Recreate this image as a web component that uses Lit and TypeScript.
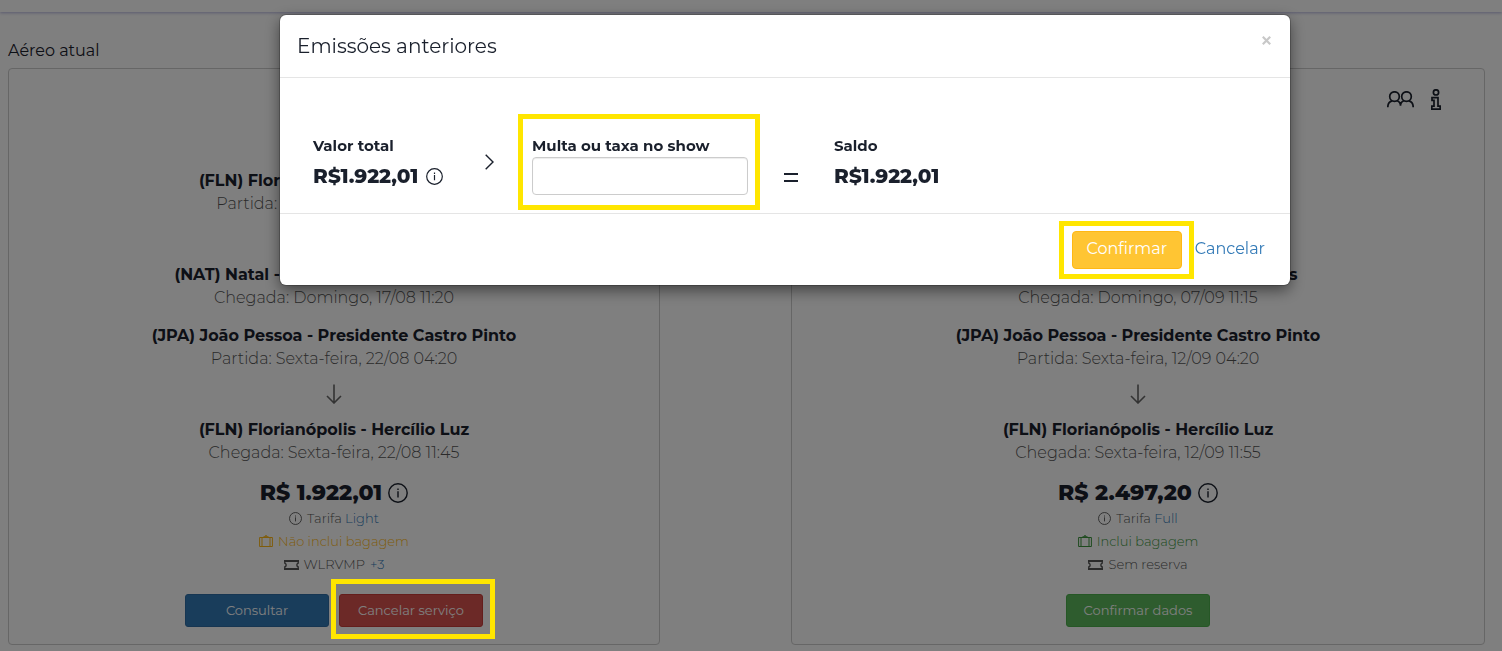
import { LitElement, html, css, svg, nothing } from "lit";
import { customElement, property } from "lit/decorators.js";

interface Leg {
  from: string;
  departs: string;
  to: string;
  arrives: string;
}

interface Offer {
  heading: string;
  legs: Leg[];
  price: string;
  fare: string;
  baggage: string;
  included: boolean;
  booking: string;
  more?: string;
}

const current: Offer = {
  heading: "Aéreo atual",
  legs: [
    {
      from: "(FLN) Florianópolis - Hercílio Luz",
      departs: "Partida: Domingo, 17/08 04:20",
      to: "(NAT) Natal - Governador Aluízio Alves",
      arrives: "Chegada: Domingo, 17/08 11:20",
    },
    {
      from: "(JPA) João Pessoa - Presidente Castro Pinto",
      departs: "Partida: Sexta-feira, 22/08 04:20",
      to: "(FLN) Florianópolis - Hercílio Luz",
      arrives: "Chegada: Sexta-feira, 22/08 11:45",
    },
  ],
  price: "R$ 1.922,01",
  fare: "Light",
  baggage: "Não inclui bagagem",
  included: false,
  booking: "WLRVMP",
  more: "+3",
};

const next: Offer = {
  heading: "Aéreo novo",
  legs: [
    {
      from: "(FLN) Florianópolis - Hercílio Luz",
      departs: "Partida: Domingo, 07/09 04:20",
      to: "(NAT) Natal - Governador Aluízio Alves",
      arrives: "Chegada: Domingo, 07/09 11:15",
    },
    {
      from: "(JPA) João Pessoa - Presidente Castro Pinto",
      departs: "Partida: Sexta-feira, 12/09 04:20",
      to: "(FLN) Florianópolis - Hercílio Luz",
      arrives: "Chegada: Sexta-feira, 12/09 11:55",
    },
  ],
  price: "R$ 2.497,20",
  fare: "Full",
  baggage: "Inclui bagagem",
  included: true,
  booking: "Sem reserva",
};

const infoIcon = (size: number, stroke = 1.4) => html`<svg
  width=${size}
  height=${size}
  viewBox="0 0 20 20"
  fill="none"
  stroke="currentColor"
  stroke-width=${stroke}
  aria-hidden="true"
>
  ${svg`<circle cx="10" cy="10" r="9.2"/><path d="M10 8.2V14.4M10 5.4V7"/>`}
</svg>`;

const arrowIcon = html`<svg width="16" height="20" viewBox="0 0 16 20" fill="none" stroke="currentColor" stroke-width="1.6" aria-hidden="true">
  <path d="M8 .5V18.8M1 12L8 19L15 12" />
</svg>`;

const bagIcon = html`<svg width="14" height="13" viewBox="0 0 14 13" fill="none" stroke="currentColor" aria-hidden="true">
  <path d="M.6 2.5H13.4V11.5H.6ZM3 2.5V11.5M11 2.5V11.5" />
  <path d="M4.5 1.9H9.5" stroke-width="1.4" />
  <path d="M6 .8H8" />
</svg>`;

const ticketIcon = html`<svg width="15" height="10" viewBox="0 0 15 10" fill="none" stroke="currentColor" stroke-width="1.4" aria-hidden="true">
  <path d="M.8 1V3.1C2.6 3.6 2.6 6.4 .8 6.9V9M14.2 1V3.1C12.4 3.6 12.4 6.4 14.2 6.9V9" />
  <path d="M0 1H15M0 9H15" stroke-width="2" />
</svg>`;

const peopleIcon = html`<svg width="27" height="17" viewBox="0 0 27 17" fill="none" stroke="currentColor" stroke-width="1.7" aria-hidden="true">
  <circle cx="7.5" cy="5.6" r="4.8" />
  <circle cx="19.5" cy="5.6" r="4.8" />
  <path d="M.8 16.2C.8 12.6 2.6 10.4 5.2 9.8M9.8 9.8C12 10.4 13.5 12.2 13.5 14.8C13.5 12.2 15 10.4 17.2 9.8M21.8 9.8C24.4 10.4 26.2 12.6 26.2 16.2" />
</svg>`;

const letterInfoIcon = html`<svg width="10" height="21" viewBox="0 0 10 21" fill="none" stroke="currentColor" stroke-width="1.7" aria-hidden="true">
  <circle cx="5" cy="3.4" r="2.6" />
  <path d="M1 8.6H7V17.2H9.2V20.2H.8V17.2H3V11.4H1Z" />
</svg>`;

const base = css`
  * {
    box-sizing: border-box;
  }
  button {
    font: inherit;
    margin: 0;
    cursor: pointer;
  }
  svg {
    display: block;
    flex: none;
  }
  a {
    color: #337ab7;
    text-decoration: none;
  }
  .marked {
    position: relative;
    display: flex;
  }
  .marked::after {
    content: "";
    position: absolute;
    z-index: 20;
    inset: var(--mark-inset);
    border: 5px solid #ffe600;
    pointer-events: none;
  }
`;

@customElement("flight-card")
export class FlightCard extends LitElement {
  @property({ attribute: false }) offer!: Offer;
  @property({ type: Boolean }) cancellable = false;

  static styles = [
    base,
    css`
      :host {
        display: block;
      }
      .heading {
        margin: 0 0 7px;
        font-size: 16px;
        font-weight: 400;
        line-height: 20px;
      }
      .card {
        border: 1px solid #ccc;
        border-radius: 4px;
        padding: 20px 43px 17px;
        display: flex;
        flex-direction: column;
        align-items: center;
      }
      .tools {
        align-self: flex-end;
        display: flex;
        align-items: center;
        gap: 17px;
        height: 20px;
        margin-bottom: 60px;
      }
      .tool {
        border: 0;
        padding: 0;
        background: none;
        color: inherit;
      }
      .leg {
        text-align: center;
        margin-bottom: 15px;
      }
      .airport,
      .time {
        margin: 0;
        font-size: 16px;
        line-height: 23px;
      }
      .airport {
        font-weight: 700;
      }
      .time {
        color: #555;
        font-weight: 300;
      }
      .arrow {
        height: 48px;
        display: flex;
        align-items: center;
        justify-content: center;
        color: #666;
      }
      .price {
        display: flex;
        align-items: center;
        gap: 6px;
        margin: 0;
        font-size: 22px;
        font-weight: 800;
        line-height: 28px;
      }
      .detail {
        display: flex;
        align-items: center;
        gap: 5px;
        font-size: 13px;
        font-weight: 300;
        line-height: 23px;
        color: #555;
      }
      .excluded {
        color: #ffb814;
      }
      .included {
        color: #3c963d;
      }
      .actions {
        display: flex;
        gap: 10px;
        margin-top: 18px;
      }
      .action {
        width: 144px;
        height: 33px;
        padding: 0 0 2px;
        border: 1px solid;
        border-radius: 3px;
        color: #fff;
        font-size: 13px;
      }
      .view {
        background: #337ab7;
        border-color: #2e6da4;
      }
      .cancel {
        background: #d9534f;
        border-color: #c93c38;
      }
      .confirm {
        background: #5cb85c;
        border-color: #4cae4c;
      }
      .marked {
        --mark-inset: -15px -12px -12px -8px;
      }
    `,
  ];

  render() {
    const o = this.offer;
    return html`
      <h2 class="heading">${o.heading}</h2>
      <section class="card">
        <div class="tools">
          <button class="tool" aria-label="Passageiros">${peopleIcon}</button>
          <button class="tool" aria-label="Informações">${letterInfoIcon}</button>
        </div>
        ${o.legs.map(
          (leg) => html`<div class="leg">
            <p class="airport">${leg.from}</p>
            <p class="time">${leg.departs}</p>
            <div class="arrow">${arrowIcon}</div>
            <p class="airport">${leg.to}</p>
            <p class="time">${leg.arrives}</p>
          </div>`
        )}
        <p class="price">${o.price} ${infoIcon(20)}</p>
        <div class="detail">
          ${infoIcon(13)} <span>Tarifa <a href="#tarifa">${o.fare}</a></span>
        </div>
        <div class="detail ${o.included ? "included" : "excluded"}">${bagIcon} ${o.baggage}</div>
        <div class="detail">
          ${ticketIcon} ${o.booking} ${o.more ? html`<a href="#reservas">${o.more}</a>` : nothing}
        </div>
        <div class="actions">
          ${this.cancellable
            ? html`<button class="action view">Consultar</button>
                <div class="marked"><button class="action cancel">Cancelar serviço</button></div>`
            : html`<button class="action confirm">Confirmar dados</button>`}
        </div>
      </section>
    `;
  }
}

@customElement("balance-dialog")
export class BalanceDialog extends LitElement {
  static styles = [
    base,
    css`
      :host {
        display: block;
      }
      .dialog {
        background: #fff;
        border-radius: 6px;
        box-shadow: 0 0 0 1px rgba(0, 0, 0, 0.2), 0 5px 15px rgba(0, 0, 0, 0.5);
      }
      .header {
        display: flex;
        justify-content: space-between;
        align-items: flex-start;
        padding: 16px 17px;
        border-bottom: 1px solid #e5e5e5;
      }
      .title {
        margin: 0;
        font-size: 20px;
        font-weight: 400;
        line-height: 30px;
      }
      .close {
        border: 0;
        padding: 5px 2px;
        background: none;
        color: #c8c8c8;
      }
      .body {
        display: grid;
        grid-template-columns: 133px 86px 216px 86px 1fr;
        padding: 58px 33px 18px;
        border-bottom: 1px solid #e5e5e5;
      }
      .label {
        display: block;
        margin: 0;
        font-size: 15px;
        font-weight: 700;
        line-height: 20px;
      }
      .amount {
        display: flex;
        align-items: center;
        gap: 8px;
        margin: 5px 0 0;
        font-size: 20px;
        font-weight: 800;
        line-height: 30px;
      }
      .sign {
        display: flex;
        justify-content: center;
        padding-top: 18px;
      }
      .equals {
        padding-top: 37px;
      }
      .field {
        flex-direction: column;
        --mark-inset: -22px -12px -15px -14px;
      }
      .input {
        width: 100%;
        height: 38px;
        margin-top: 1px;
        padding: 6px 12px;
        border: 1px solid #ccc;
        border-radius: 4px;
        font: inherit;
        box-shadow: inset 0 1px 1px rgba(0, 0, 0, 0.075);
      }
      .footer {
        display: flex;
        justify-content: flex-end;
        align-items: center;
        gap: 13px;
        padding: 17px 25px 16px;
        line-height: 20px;
      }
      .confirm {
        height: 38px;
        width: 110px;
        padding: 0 0 2px;
        border: 1px solid #ffb814;
        border-radius: 4px;
        background: #ffc533;
        color: #fff;
      }
      .ok {
        --mark-inset: -10px -12px -10px -13px;
      }
      .dismiss {
        padding-bottom: 2px;
      }
    `,
  ];

  render() {
    return html`
      <section class="dialog" role="dialog" aria-modal="true" aria-labelledby="title">
        <header class="header">
          <h1 class="title" id="title">Emissões anteriores</h1>
          <button class="close" aria-label="Fechar">
            <svg width="9" height="9" viewBox="0 0 9 9" stroke="currentColor" stroke-width="2.2">
              <path d="M.8 .8L8.2 8.2M8.2 .8L.8 8.2" />
            </svg>
          </button>
        </header>
        <div class="body">
          <div>
            <p class="label">Valor total</p>
            <p class="amount">R$1.922,01 ${infoIcon(17)}</p>
          </div>
          <div class="sign">
            <svg width="9" height="16" viewBox="0 0 9 16" fill="none" stroke="currentColor" stroke-width="1.4">
              <path d="M.7 .7L8 8L.7 15.3" />
            </svg>
          </div>
          <div class="marked field">
            <label class="label" for="fee">Multa ou taxa no show</label>
            <input class="input" id="fee" type="text" />
          </div>
          <div class="sign equals">
            <svg width="14" height="10" viewBox="0 0 14 10" stroke="currentColor" stroke-width="2">
              <path d="M0 1H14M0 8H14" />
            </svg>
          </div>
          <div>
            <p class="label">Saldo</p>
            <p class="amount">R$1.922,01</p>
          </div>
        </div>
        <footer class="footer">
          <div class="marked ok"><button class="confirm">Confirmar</button></div>
          <a class="dismiss" href="#cancelar">Cancelar</a>
        </footer>
      </section>
    `;
  }
}

@customElement("app-root")
export class AppRoot extends LitElement {
  static styles = [
    base,
    css`
      :host {
        display: block;
        min-height: 100vh;
        overflow: hidden;
        background: #fff;
        color: #1a202c;
        font-family: Montserrat, Inter, "Open Sans", sans-serif;
        font-size: 16px;
      }
      .topbar {
        height: 12px;
        background: #fff;
        box-shadow: 0 1px 3px rgba(130, 130, 200, 0.6);
      }
      .offers {
        display: grid;
        grid-template-columns: 652fr 694fr;
        gap: 131px;
        padding: 29px 17px 6px 8px;
      }
      .backdrop {
        position: fixed;
        inset: 0;
        z-index: 10;
        padding: 15px 212px 0 280px;
        background: rgba(0, 0, 0, 0.5);
      }
    `,
  ];

  render() {
    return html`
      <div class="topbar"></div>
      <main class="offers">
        <flight-card .offer=${current} cancellable></flight-card>
        <flight-card .offer=${next}></flight-card>
      </main>
      <div class="backdrop"><balance-dialog></balance-dialog></div>
    `;
  }
}
